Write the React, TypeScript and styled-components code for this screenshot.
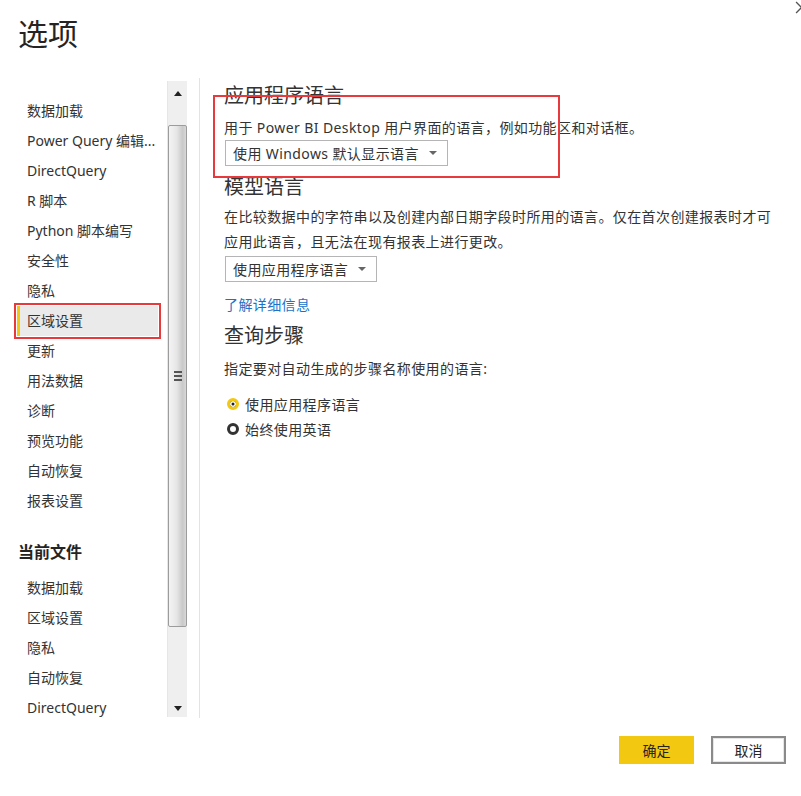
import styled, { createGlobalStyle } from "styled-components";

const GlobalStyle = createGlobalStyle`
  html, body {
    margin: 0;
    padding: 0;
    background: #ffffff;
  }
  body {
    font-family: "Segoe UI", "Noto Sans", "Noto Sans CJK SC", sans-serif;
    color: #333333;
  }
`;

const appItems = [
  "数据加载",
  "Power Query 编辑...",
  "DirectQuery",
  "R 脚本",
  "Python 脚本编写",
  "安全性",
  "隐私",
  "区域设置",
  "更新",
  "用法数据",
  "诊断",
  "预览功能",
  "自动恢复",
  "报表设置",
];

const fileItems = ["数据加载", "区域设置", "隐私", "自动恢复", "DirectQuery"];

const App = () => {
  return (
    <>
      <GlobalStyle />
      <Dialog>
        <Header>
          <Title>选项</Title>
          <CloseIcon viewBox="0 0 12 12">
            <path d="M1 1 L11 11 M11 1 L1 11" stroke="#555" strokeWidth="1.2" />
          </CloseIcon>
        </Header>
        <Main>
          <Sidebar>
            <NavList>
              {appItems.map((item) => (
                <NavItem key={item} $active={item === "区域设置"}>
                  {item}
                </NavItem>
              ))}
              <NavHeader>当前文件</NavHeader>
              {fileItems.map((item) => (
                <NavItem key={"f" + item}>{item}</NavItem>
              ))}
            </NavList>
            <ScrollBar>
              <ArrowBtn>
                <svg width="8" height="5" viewBox="0 0 8 5">
                  <path d="M0 5 L4 0 L8 5 Z" fill="#222" />
                </svg>
              </ArrowBtn>
              <Thumb>
                <Grip>
                  <span />
                  <span />
                  <span />
                </Grip>
              </Thumb>
              <Track />
              <ArrowBtn>
                <svg width="8" height="5" viewBox="0 0 8 5">
                  <path d="M0 0 L8 0 L4 5 Z" fill="#222" />
                </svg>
              </ArrowBtn>
            </ScrollBar>
          </Sidebar>
          <Content>
            <Highlight />
            <SectionTitle>应用程序语言</SectionTitle>
            <Description>
              用于 Power BI Desktop 用户界面的语言，例如功能区和对话框。
            </Description>
            <Select>
              使用 Windows 默认显示语言
              <Caret />
            </Select>
            <SectionTitle $gap={7}>模型语言</SectionTitle>
            <Description $gap={3} $lh={25}>
              在比较数据中的字符串以及创建内部日期字段时所用的语言。仅在首次创建报表时才可应用此语言，且无法在现有报表上进行更改。
            </Description>
            <Select $gap={2}>
              使用应用程序语言
              <Caret />
            </Select>
            <LearnMore href="#">了解详细信息</LearnMore>
            <SectionTitle $gap={7}>查询步骤</SectionTitle>
            <Description $gap={7}>
              指定要对自动生成的步骤名称使用的语言:
            </Description>
            <RadioGroup>
              <RadioRow>
                <Radio $checked />
                使用应用程序语言
              </RadioRow>
              <RadioRow>
                <Radio />
                始终使用英语
              </RadioRow>
            </RadioGroup>
          </Content>
        </Main>
        <Footer>
          <Button $primary>确定</Button>
          <Button>取消</Button>
        </Footer>
      </Dialog>
    </>
  );
};

const Dialog = styled.div`
  width: 801px;
  height: 796px;
  display: flex;
  flex-direction: column;
  overflow: hidden;
  background: #fff;
`;

const Header = styled.div`
  position: relative;
  height: 78px;
  padding: 12px 0 0 18px;
  box-sizing: border-box;
`;

const Title = styled.h1`
  margin: 0;
  font-size: 30px;
  font-weight: 400;
  line-height: 40px;
  color: #252423;
  font-family: "Noto Sans CJK SC", sans-serif;
`;

const CloseIcon = styled.svg`
  position: absolute;
  top: 1px;
  right: -7px;
  width: 13px;
  height: 13px;
`;

const Main = styled.div`
  display: flex;
  height: 640px;
`;

const Sidebar = styled.div`
  width: 199px;
  display: flex;
  border-right: 1px solid #e3e3e3;
  overflow: hidden;
`;

const NavList = styled.div`
  width: 167px;
  padding-top: 18px;
  display: flex;
  flex-direction: column;
  font-size: 14px;
`;

const NavItem = styled.div<{ $active?: boolean }>`
  height: 30px;
  line-height: 30px;
  flex-shrink: 0;
  margin: 0 9px 0 17px;
  padding-left: 7px;
  border-left: 3px solid ${(p) => (p.$active ? "#f2c811" : "transparent")};
  background: ${(p) => (p.$active ? "#eaeaea" : "transparent")};
  outline: ${(p) => (p.$active ? "2px solid #e8393d" : "none")};
  outline-offset: ${(p) => (p.$active ? "1px" : "0")};
  white-space: nowrap;
  color: #333;
`;

const NavHeader = styled.div`
  margin: 24px 0 9px 18px;
  font-size: 16px;
  font-weight: 700;
  line-height: 24px;
  color: #252423;
`;

const ScrollBar = styled.div`
  width: 19px;
  margin-top: 3px;
  margin-bottom: 1px;
  display: flex;
  flex-direction: column;
  background: #efefef;
  border-left: 1px solid #e6e6e6;
`;

const ArrowBtn = styled.div`
  height: 30px;
  flex-shrink: 0;
  display: flex;
  align-items: center;
  justify-content: center;
  &:first-child {
    height: 44px;
    align-items: flex-start;
    padding-top: 10px;
    box-sizing: border-box;
  }
  &:last-child {
    align-items: flex-end;
    padding-bottom: 6px;
    box-sizing: border-box;
  }
`;

const Thumb = styled.div`
  height: 502px;
  flex-shrink: 0;
  box-sizing: border-box;
  border: 1px solid #9c9c9c;
  border-radius: 2px;
  background: linear-gradient(to right, #f4f4f4 0%, #e6e6e6 45%, #c9c9cb 80%, #d8d8d8 100%);
  display: flex;
  align-items: center;
  justify-content: center;
`;

const Grip = styled.div`
  display: flex;
  flex-direction: column;
  gap: 2px;
  span {
    display: block;
    width: 8px;
    height: 2px;
    background: #555;
  }
`;

const Track = styled.div`
  flex: 1;
`;

const Content = styled.div`
  position: relative;
  flex: 1;
  padding: 4px 0 0 24px;
  display: flex;
  flex-direction: column;
  align-items: flex-start;
  letter-spacing: 0.4px;
  font-family: "Segoe UI", "Noto Sans", "Noto Sans CJK SC", sans-serif;
`;

const Highlight = styled.div`
  position: absolute;
  left: 13px;
  top: 17px;
  width: 347px;
  height: 83px;
  box-sizing: border-box;
  border: 2px solid #e8393d;
  pointer-events: none;
`;

const SectionTitle = styled.h2<{ $gap?: number }>`
  margin: ${(p) => p.$gap ?? 0}px 0 0 0;
  font-size: 20px;
  font-weight: 400;
  line-height: 28px;
  letter-spacing: 0;
  color: #333;
`;

const Description = styled.p<{ $gap?: number; $lh?: number }>`
  margin: ${(p) => p.$gap ?? 6}px 0 0 0;
  font-size: 14px;
  line-height: ${(p) => p.$lh ?? 24}px;
  max-width: 556px;
  color: #333;
`;

const Select = styled.div<{ $gap?: number }>`
  margin-top: ${(p) => p.$gap ?? 0}px;
  margin-left: 1px;
  height: 26px;
  box-sizing: border-box;
  border: 1px solid #b5b5b5;
  padding: 0 10px 0 7px;
  display: flex;
  align-items: center;
  gap: 10px;
  font-size: 14px;
  color: #333;
`;

const Caret = styled.span`
  width: 0;
  height: 0;
  border-left: 4px solid transparent;
  border-right: 4px solid transparent;
  border-top: 4px solid #666;
`;

const LearnMore = styled.a`
  margin-top: 13px;
  font-size: 14px;
  line-height: 20px;
  color: #1a73c8;
  text-decoration: none;
`;

const RadioGroup = styled.div`
  margin-top: 10px;
  display: flex;
  flex-direction: column;
`;

const RadioRow = styled.label`
  height: 25px;
  display: flex;
  align-items: center;
  gap: 6px;
  font-size: 14px;
  color: #333;
`;

const Radio = styled.span<{ $checked?: boolean }>`
  width: 12px;
  height: 12px;
  margin-left: 3px;
  box-sizing: border-box;
  border-radius: 50%;
  border: ${(p) => (p.$checked ? "3px solid #f2c811" : "3px solid #333")};
  background: ${(p) => (p.$checked ? "#222" : "#fff")};
  box-shadow: ${(p) => (p.$checked ? "inset 0 0 0 1.5px #fff" : "none")};
`;

const Footer = styled.div`
  height: 78px;
  display: flex;
  justify-content: flex-end;
  align-items: flex-start;
  padding: 18px 15px 0 0;
  box-sizing: border-box;
  gap: 17px;
`;

const Button = styled.button<{ $primary?: boolean }>`
  width: 75px;
  height: 28px;
  box-sizing: border-box;
  font-family: "Noto Sans CJK SC", sans-serif;
  font-size: 14px;
  color: #252423;
  background: ${(p) => (p.$primary ? "#f2c811" : "#fff")};
  border: ${(p) => (p.$primary ? "none" : "2px solid #8a8a8a")};
  box-shadow: ${(p) => (p.$primary ? "none" : "inset 0 0 0 1px #e6e6e6")};
  padding: 0;
  cursor: pointer;
`;

export default App;
